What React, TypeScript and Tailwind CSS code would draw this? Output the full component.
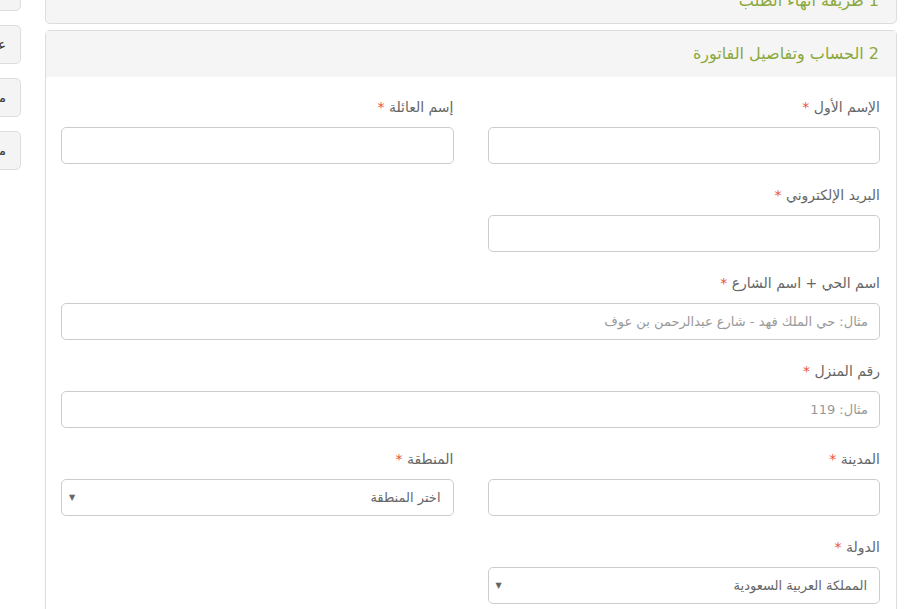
import React from "react";

const fieldFont = { fontFamily: '"DejaVu Sans", "Noto Sans", sans-serif' };

interface FieldProps {
  label: string;
  placeholder?: string;
  select?: string;
}

const Field: React.FC<FieldProps> = ({ label, placeholder, select }) => {
  return (
    <div className="flex flex-col">
      <label className="h-[20px] leading-[20px] text-[14px] text-[#666] mb-[10px]">
        {label} <span className="text-[#e8533a]">*</span>
      </label>
      {select ? (
        <div className="h-[37px] rounded-[5px] border border-[#ccc] bg-white flex items-center justify-between pr-[12px] pl-[7px]">
          <span className="text-[13px] text-[#666]">{select}</span>
          <span className="text-[8px] text-[#666] leading-none">▼</span>
        </div>
      ) : (
        <div className="h-[37px] rounded-[5px] border border-[#ccc] bg-white flex items-center pr-[11px]">
          {placeholder && <span className="text-[13px] text-[#999]">{placeholder}</span>}
        </div>
      )}
    </div>
  );
};

const SideTab: React.FC<{ text: string }> = ({ text }) => (
  <div className="w-[70px] h-[39px] shrink-0 rounded-[5px] border border-[#ddd] bg-[#f4f4f4] flex items-center justify-start pr-[14px] text-[13px] text-[#333] whitespace-nowrap">
    {text}
  </div>
);

export default function App() {
  return (
    <div className="w-[912px] h-[609px] overflow-hidden bg-white flex" style={fieldFont}>
      <aside dir="rtl" className="w-[21px] shrink-0 overflow-hidden flex flex-col items-start gap-[14px] mt-[-28px]">
        <SideTab text="السلة" />
        <SideTab text="عرض" />
        <SideTab text="مقارنة" />
        <SideTab text="مفضلة" />
      </aside>

      <main dir="rtl" className="ml-[24px] w-[852px] shrink-0 flex flex-col gap-[6px]">
        <section className="mt-[-23px] h-[47px] shrink-0 rounded-[5px] border border-[#ddd] bg-[#f5f5f5] flex items-center px-[17px]">
          <h3 className="text-[16px] text-[#8ba83b]">1 طريقة انهاء الطلب</h3>
        </section>

        <section className="rounded-t-[5px] border border-b-0 border-[#ddd] bg-white flex-1">
          <header className="h-[46px] bg-[#f5f5f5] flex items-center px-[17px]">
            <h3 className="text-[16px] text-[#8ba83b]">2 الحساب وتفاصيل الفاتورة</h3>
          </header>
          <div className="pr-[16px] pl-[15px] pt-[20px] grid grid-cols-2 gap-x-[34px] gap-y-[21px]">
            <Field label="الإسم الأول" />
            <Field label="إسم العائلة" />
            <Field label="البريد الإلكتروني" />
            <div />
            <div className="col-span-2">
              <Field label="اسم الحي + اسم الشارع" placeholder="مثال: حي الملك فهد - شارع عبدالرحمن بن عوف" />
            </div>
            <div className="col-span-2">
              <Field label="رقم المنزل" placeholder="مثال: 119" />
            </div>
            <Field label="المدينة" />
            <Field label="المنطقة" select="اختر المنطقة" />
            <Field label="الدولة" select="المملكة العربية السعودية" />
          </div>
        </section>
      </main>
    </div>
  );
}
